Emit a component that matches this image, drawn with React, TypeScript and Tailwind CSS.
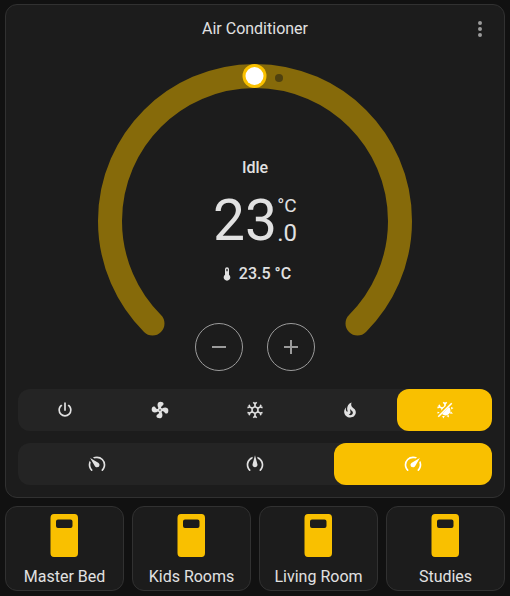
import { useState, type ReactNode } from "react";

const icons = {
  power:
    "M16.56,5.44L15.11,6.89C16.84,7.94 18,9.83 18,12A6,6 0 0,1 12,18A6,6 0 0,1 6,12C6,9.83 7.16,7.94 8.88,6.88L7.44,5.44C5.36,6.88 4,9.28 4,12A8,8 0 0,0 12,20A8,8 0 0,0 20,12C20,9.28 18.64,6.88 16.56,5.44M13,3H11V13H13",
  fan: "M12,11A1,1 0 0,0 11,12A1,1 0 0,0 12,13A1,1 0 0,0 13,12A1,1 0 0,0 12,11M12.5,2C17,2 17.11,5.57 14.75,6.75C13.76,7.24 13.32,8.29 13.13,9.22C13.61,9.42 14.03,9.73 14.35,10.13C18.05,8.13 22.03,8.92 22.03,12.5C22.03,17 18.46,17.1 17.28,14.73C16.78,13.74 15.72,13.3 14.79,13.11C14.59,13.59 14.28,14 13.88,14.34C15.87,18.03 15.08,22 11.5,22C7,22 6.91,18.42 9.27,17.24C10.25,16.75 10.69,15.71 10.89,14.79C10.4,14.59 9.97,14.27 9.65,13.87C5.96,15.85 2,15.07 2,11.5C2,7 5.56,6.89 6.74,9.26C7.24,10.25 8.29,10.68 9.22,10.87C9.41,10.39 9.73,9.97 10.14,9.65C8.15,5.96 8.94,2 12.5,2Z",
  snowflake:
    "M20.79,13.95L18.46,14.57L16.46,13.44V10.56L18.46,9.43L20.79,10.05L21.31,8.12L19.54,7.65L20,5.88L18.07,5.36L17.45,7.69L15.45,8.82L13,7.38V5.12L14.71,3.41L13.29,2L12,3.29L10.71,2L9.29,3.41L11,5.12V7.38L8.5,8.82L6.5,7.69L5.92,5.36L4,5.88L4.47,7.65L2.7,8.12L3.22,10.05L5.55,9.43L7.55,10.56V13.45L5.55,14.58L3.22,13.96L2.7,15.89L4.47,16.36L4,18.12L5.93,18.64L6.55,16.31L8.55,15.18L11,16.62V18.88L9.29,20.59L10.71,22L12,20.71L13.29,22L14.7,20.59L13,18.88V16.62L15.5,15.17L17.5,16.3L18.12,18.63L20,18.12L19.53,16.35L21.3,15.88L20.79,13.95M9.5,10.56L12,9.11L14.5,10.56V13.44L12,14.89L9.5,13.44V10.56Z",
  fire: "M17.66 11.2C17.43 10.9 17.15 10.64 16.89 10.38C16.22 9.78 15.46 9.35 14.82 8.72C13.33 7.26 13 4.85 13.95 3C13 3.23 12.17 3.75 11.46 4.32C8.87 6.4 7.85 10.07 9.07 13.22C9.11 13.32 9.15 13.42 9.15 13.55C9.15 13.77 9 13.97 8.8 14.05C8.57 14.15 8.33 14.09 8.14 13.93C8.08 13.88 8.04 13.83 8 13.76C6.87 12.33 6.69 10.28 7.45 8.64C5.78 10 4.87 12.3 5 14.47C5.06 14.97 5.12 15.47 5.29 15.97C5.43 16.57 5.7 17.17 6 17.7C7.08 19.43 8.95 20.67 10.96 20.92C13.1 21.19 15.39 20.8 17.03 19.32C18.86 17.66 19.5 15 18.56 12.72L18.43 12.46C18.22 12 17.66 11.2 17.66 11.2M14.5 17.5C14.22 17.74 13.76 18 13.4 18.1C12.28 18.5 11.16 17.94 10.5 17.28C11.69 17 12.4 16.12 12.61 15.23C12.78 14.43 12.46 13.77 12.33 13C12.21 12.26 12.23 11.63 12.5 10.94C12.69 11.32 12.89 11.7 13.13 12C13.9 13 15.11 13.44 15.37 14.8C15.41 14.94 15.43 15.08 15.43 15.23C15.46 16.05 15.1 16.95 14.5 17.5H14.5Z",
  gaugeMedium:
    "M12 1.38L9.14 12.06C8.8 13.1 9.04 14.29 9.86 15.12C11.04 16.29 12.94 16.29 14.11 15.12C14.9 14.33 15.16 13.2 14.89 12.21M14.6 3.35L15.22 5.68C18.04 6.92 20 9.73 20 13C20 15.21 19.11 17.21 17.66 18.65H17.65C17.26 19.04 17.26 19.67 17.65 20.06C18.04 20.45 18.68 20.45 19.07 20.07C20.88 18.26 22 15.76 22 13C22 8.38 18.86 4.5 14.6 3.35M9.4 3.36C5.15 4.5 2 8.4 2 13C2 15.76 3.12 18.26 4.93 20.07C5.32 20.45 5.95 20.45 6.34 20.06C6.73 19.67 6.73 19.04 6.34 18.65C4.89 17.2 4 15.21 4 13C4 9.65 5.94 6.86 8.79 5.65",
  gaugeFast:
    "M12,16A3,3 0 0,1 9,13C9,11.88 9.61,10.9 10.5,10.39L20.21,4.77L14.68,14.35C14.18,15.33 13.17,16 12,16M12,3C13.81,3 15.5,3.5 16.97,4.32L14.87,5.53C14,5.19 13,5 12,5A8,8 0 0,0 4,13C4,15.21 4.89,17.21 6.34,18.65H6.35C6.74,19.04 6.74,19.67 6.35,20.06C5.96,20.45 5.32,20.45 4.93,20.07V20.07C3.12,18.26 2,15.76 2,13A10,10 0 0,1 12,3M22,13C22,15.76 20.88,18.26 19.07,20.07V20.07C18.68,20.45 18.05,20.45 17.66,20.06C17.27,19.67 17.27,19.04 17.66,18.65V18.65C19.11,17.2 20,15.21 20,13C20,12 19.81,11 19.46,10.1L20.67,8C21.5,9.5 22,11.18 22,13Z",
  thermometer:
    "M15 13V5A3 3 0 0 0 9 5V13A5 5 0 1 0 15 13M12 4A1 1 0 0 1 13 5V8H11V5A1 1 0 0 1 12 4Z",
  dots: "M12,16A2,2 0 0,1 14,18A2,2 0 0,1 12,20A2,2 0 0,1 10,18A2,2 0 0,1 12,16M12,10A2,2 0 0,1 14,12A2,2 0 0,1 12,14A2,2 0 0,1 10,12A2,2 0 0,1 12,10M12,4A2,2 0 0,1 14,6A2,2 0 0,1 12,8A2,2 0 0,1 10,6A2,2 0 0,1 12,4Z",
  plus: "M19,13H13V19H11V13H5V11H11V5H13V11H19V13Z",
  minus: "M19,13H5V11H19V13Z",
};

function Icon({ d, className = "size-5" }: { d: string; className?: string }) {
  return (
    <svg viewBox="0 0 24 24" className={className} fill="currentColor" aria-hidden="true">
      <path d={d} />
    </svg>
  );
}

function HeatCoolIcon() {
  return (
    <svg viewBox="0 0 24 24" className="size-5" fill="currentColor" aria-hidden="true">
      <clipPath id="cold-half">
        <path d="M0 0H20L0 20Z" />
      </clipPath>
      <path d={icons.snowflake} clipPath="url(#cold-half)" />
      <path d="M19.4 3.2L20.8 4.6L4.6 20.8L3.2 19.4Z" />
      <path d="M16.8 8.4A5.4 5.4 0 0 1 8.4 16.8Z" />
      <path d="M19.2 8.3L22.2 9.6L19.5 11.5ZM19 13.5L21.5 16.5L17.8 16.2ZM16.4 17.6L16.8 21L13.7 19.1ZM11.8 19.3L10 22.2L8.6 19.2Z" />
    </svg>
  );
}

type Option = { name: string; icon: ReactNode };

const modes: Option[] = [
  { name: "Off", icon: <Icon d={icons.power} /> },
  { name: "Fan only", icon: <Icon d={icons.fan} /> },
  { name: "Cool", icon: <Icon d={icons.snowflake} /> },
  { name: "Heat", icon: <Icon d={icons.fire} /> },
  { name: "Heat/Cool", icon: <HeatCoolIcon /> },
];

const speeds: Option[] = [
  { name: "Low", icon: <Icon d={icons.gaugeFast} className="size-5 -scale-x-100" /> },
  { name: "Medium", icon: <Icon d={icons.gaugeMedium} /> },
  { name: "High", icon: <Icon d={icons.gaugeFast} /> },
];

function Segmented({ label, options, initial }: { label: string; options: Option[]; initial: string }) {
  const [value, setValue] = useState(initial);
  return (
    <div role="group" aria-label={label} className="flex h-[42px] rounded-xl bg-[#242424]">
      {options.map((o) => (
        <button
          key={o.name}
          type="button"
          aria-label={o.name}
          aria-pressed={value === o.name}
          onClick={() => setValue(o.name)}
          className="flex flex-1 items-center justify-center rounded-xl aria-pressed:bg-[#f9c000] aria-pressed:text-white"
        >
          {o.icon}
        </button>
      ))}
    </div>
  );
}

function RoundButton({ label, d }: { label: string; d: string }) {
  return (
    <button
      type="button"
      aria-label={label}
      className="flex size-12 items-center justify-center rounded-full border border-[#9b9b9b] text-[#9b9b9b]"
    >
      <Icon d={d} className="size-6" />
    </button>
  );
}

function Dial() {
  return (
    <div className="mx-auto grid w-full max-w-80">
      <svg viewBox="0 0 320 320" className="col-start-1 row-start-1 w-full" aria-hidden="true">
        <path
          d="M57.5 262.5A145 145 0 1 1 262.5 262.5"
          fill="none"
          stroke="#866a0a"
          strokeWidth="24"
          strokeLinecap="round"
        />
        <circle cx="184" cy="17" r="4" fill="#4f410f" />
        <circle cx="159.5" cy="15" r="12" fill="#f9c000" />
        <circle cx="159.5" cy="15" r="9" fill="#fff" />
      </svg>
      <div className="col-start-1 row-start-1 flex flex-col items-center justify-end pb-[10px]">
        <p className="font-medium">Idle</p>
        <div className="mt-[9px] flex h-16">
          <span className="text-[57px] leading-16">23</span>
          <span className="flex flex-col pt-1">
            <span className="text-[19px] leading-[26px]">°C</span>
            <span className="text-2xl leading-7">.0</span>
          </span>
        </div>
        <p className="mt-[9px] flex items-center gap-1 font-medium">
          <Icon d={icons.thermometer} className="size-4" />
          23.5 °C
        </p>
        <div className="mt-[37px] flex gap-6">
          <RoundButton label="Decrease temperature" d={icons.minus} />
          <RoundButton label="Increase temperature" d={icons.plus} />
        </div>
      </div>
    </div>
  );
}

const rooms = ["Master Bed", "Kids Rooms", "Living Room", "Studies"];

function RoomButton({ name }: { name: string }) {
  return (
    <button
      type="button"
      className="flex flex-col items-center gap-2 rounded-xl border border-[#313131] bg-[#1c1c1c] pt-[7px] pb-px"
    >
      <svg viewBox="0 0 29 43" className="h-[43px] w-[29px] text-[#f9c000]" fill="currentColor" aria-hidden="true">
        <path
          fillRule="evenodd"
          d="M4 0H24.5Q28 0 28 4V39Q28 43 24.5 43H4Q.5 43 .5 39V4Q.5 0 4 0ZM8 5.5Q6 5.5 6 7.5V12Q6 14 8 14H20.5Q22.5 14 22.5 12V7.5Q22.5 5.5 20.5 5.5Z"
        />
      </svg>
      {name}
    </button>
  );
}

export default function App() {
  return (
    <main className="flex min-h-screen flex-col gap-2 bg-[#111111] px-[5px] pt-1 pb-[5px] font-[Roboto,sans-serif] text-base text-[#e1e1e1]">
      <section className="rounded-xl border border-[#313131] bg-[#1c1c1c] px-3 pb-3">
        <header className="grid h-14 grid-cols-[24px_1fr_24px] items-center pb-2">
          <h1 className="col-start-2 text-center">Air Conditioner</h1>
          <button type="button" aria-label="More options" className="text-[#9b9b9b]">
            <Icon d={icons.dots} className="size-6" />
          </button>
        </header>
        <Dial />
        <div className="mt-2 flex flex-col gap-3">
          <Segmented label="Mode" options={modes} initial="Heat/Cool" />
          <Segmented label="Fan speed" options={speeds} initial="High" />
        </div>
      </section>
      <nav aria-label="Rooms" className="grid grid-cols-4 gap-2">
        {rooms.map((name) => (
          <RoomButton key={name} name={name} />
        ))}
      </nav>
    </main>
  );
}
